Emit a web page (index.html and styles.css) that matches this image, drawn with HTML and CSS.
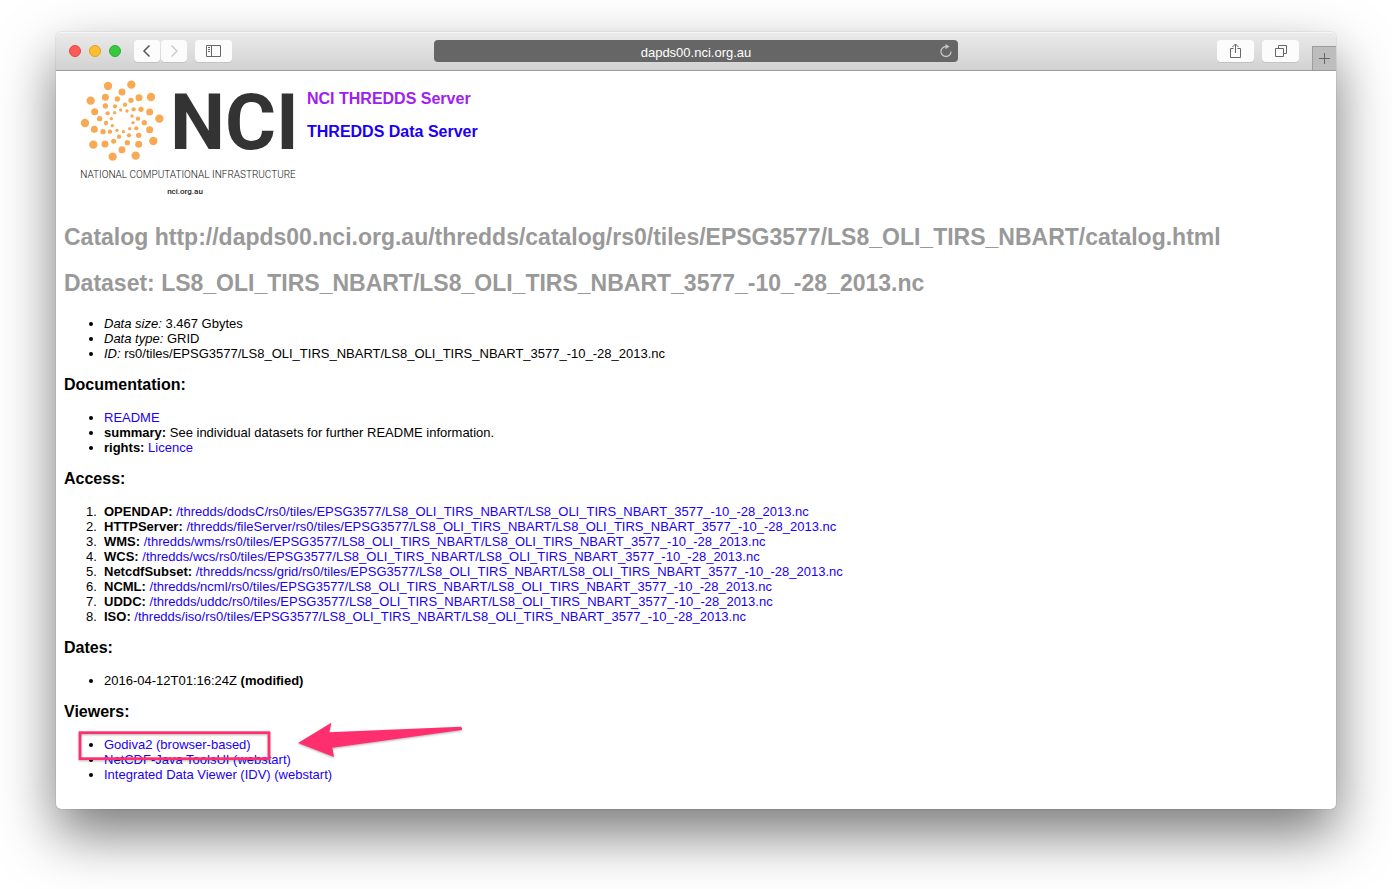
FILE: index.html
```html
<!DOCTYPE html>
<html lang="en">
<head>
<meta charset="utf-8">
<title>NCI THREDDS Server</title>
<link rel="stylesheet" href="styles.css">
</head>
<body>
<div class="window">
  <header class="toolbar">
    <div class="tools">
      <div class="lights">
        <button class="light close" aria-label="Close"></button>
        <button class="light minimise" aria-label="Minimise"></button>
        <button class="light zoom" aria-label="Zoom"></button>
      </div>
      <div class="nav">
        <button class="tool small" aria-label="Back"><svg width="26" height="22" viewBox="0 0 26 22"><path d="M15.500 5.500 10 11l5.500 5.500" fill="none" stroke="#555" stroke-width="1.500"/></svg></button>
        <button class="tool small" aria-label="Forward"><svg width="26" height="22" viewBox="0 0 26 22"><path d="M10.500 5.500 16 11l-5.500 5.500" fill="none" stroke="#ccc" stroke-width="1.500"/></svg></button>
      </div>
      <button class="tool" aria-label="Show sidebar"><svg width="37" height="22" viewBox="0 0 37 22" fill="none" stroke="#666"><path d="M11.500 5.500h14v11h-14zM16.500 5.500v11M13 7.500h2M13 9.500h2M13 11.500h2"/></svg></button>
    </div>
    <div class="address">
      <input class="url" type="text" aria-label="Address" value="dapds00.nci.org.au">
      <button class="reload" aria-label="Reload"><svg width="14" height="14" viewBox="0 0 14 14"><path d="M7 2.500A5 5 0 1 0 12 7.500" fill="none" stroke="#c4c4c4" stroke-width="1.300"/><path d="M6.500 0 10.500 2.600 6.500 5.200z" fill="#c4c4c4"/></svg></button>
    </div>
    <div class="tools right">
      <button class="tool" aria-label="Share"><svg width="37" height="22" viewBox="0 0 37 22" fill="none" stroke="#666"><path d="M16.500 8.500h-3v9h10v-9h-3M18.500 13V4M15.500 7l3-3 3 3"/></svg></button>
      <button class="tool" aria-label="Show all tabs"><svg width="37" height="22" viewBox="0 0 37 22" fill="none" stroke="#666"><path d="M13.500 8.500h8v8h-8zM16.500 8.500v-3h8v8h-3"/></svg></button>
      <button class="new-tab" aria-label="New tab"><svg width="23" height="24" viewBox="0 0 23 24"><path d="M6 11.500h11M11.500 6v11" stroke="#666"/></svg></button>
    </div>
  </header>
  <main class="page">
    <div class="masthead">
      <svg class="logo" width="232" height="125" viewBox="64 76 232 125" role="img" aria-label="NCI">
        <g fill="#f8a954" transform="translate(76 76) scale(.33333)">
          <circle cx="96" cy="30" r="12.500"/><circle cx="166" cy="26" r="12.500"/><circle cx="225" cy="63" r="12.500"/><circle cx="250" cy="128" r="12.500"/><circle cx="232" cy="195" r="12.500"/><circle cx="179" cy="239" r="12.500"/><circle cx="110" cy="242" r="12.500"/><circle cx="52" cy="206" r="12.500"/><circle cx="27" cy="141" r="12.500"/><circle cx="44" cy="74" r="12.500"/>
          <circle cx="138" cy="48" r="10.500"/><circle cx="189" cy="65" r="10.500"/><circle cx="221" cy="108" r="10.500"/><circle cx="221" cy="161" r="10.500"/><circle cx="188" cy="205" r="10.500"/><circle cx="138" cy="221" r="10.500"/><circle cx="87" cy="204" r="10.500"/><circle cx="55" cy="160" r="10.500"/><circle cx="56" cy="107" r="10.500"/><circle cx="88" cy="64" r="10.500"/>
          <circle cx="124" cy="69" r="8"/><circle cx="165" cy="73" r="8"/><circle cx="195" cy="100" r="8"/><circle cx="205" cy="140" r="8"/><circle cx="188" cy="178" r="8"/><circle cx="154" cy="200" r="8"/><circle cx="113" cy="196" r="7.500"/><circle cx="81" cy="167" r="8"/><circle cx="71" cy="128" r="8"/><circle cx="88" cy="90" r="8"/>
          <circle cx="147" cy="86" r="6.500"/><circle cx="173" cy="100" r="6.500"/><circle cx="186" cy="128" r="6.500"/><circle cx="181" cy="157" r="6.500"/><circle cx="159" cy="178" r="6.500"/><circle cx="129" cy="182" r="6.500"/><circle cx="102" cy="167" r="6.500"/><circle cx="90" cy="141" r="6.500"/><circle cx="95" cy="112" r="6.500"/><circle cx="117" cy="91" r="6.500"/>
          <circle cx="134" cy="102" r="5"/><circle cx="153" cy="105" r="5"/><circle cx="168" cy="120" r="5"/><circle cx="171" cy="140" r="5"/><circle cx="161" cy="158" r="5"/><circle cx="142" cy="167" r="5"/><circle cx="123" cy="163" r="5"/><circle cx="109" cy="149" r="5"/><circle cx="106" cy="128" r="5"/><circle cx="116" cy="110" r="5"/>
        </g>
        <text class="logo-name" x="170" y="149">NCI</text>
        <text class="logo-tag" x="188" y="178" text-anchor="middle">NATIONAL COMPUTATIONAL INFRASTRUCTURE</text>
        <text class="logo-site" x="185" y="194" text-anchor="middle">nci.org.au</text>
      </svg>
      <div class="titles">
        <h3><a class="visited" href="#nci">NCI THREDDS Server</a></h3>
        <h3><a href="#tds">THREDDS Data Server</a></h3>
      </div>
    </div>
    <h2>Catalog http://dapds00.nci.org.au/thredds/catalog/rs0/tiles/EPSG3577/LS8_OLI_TIRS_NBART/catalog.html</h2>
    <h2>Dataset: LS8_OLI_TIRS_NBART/LS8_OLI_TIRS_NBART_3577_-10_-28_2013.nc</h2>
    <ul>
      <li><em>Data size:</em> 3.467 Gbytes</li>
      <li><em>Data type:</em> GRID</li>
      <li><em>ID:</em> rs0/tiles/EPSG3577/LS8_OLI_TIRS_NBART/LS8_OLI_TIRS_NBART_3577_-10_-28_2013.nc</li>
    </ul>
    <h3>Documentation:</h3>
    <ul>
      <li><a href="#readme">README</a></li>
      <li><b>summary:</b> See individual datasets for further README information.</li>
      <li><b>rights:</b> <a href="#licence">Licence</a></li>
    </ul>
    <h3>Access:</h3>
    <ol>
      <li><b>OPENDAP:</b> <a href="#dodsC">/thredds/dodsC/rs0/tiles/EPSG3577/LS8_OLI_TIRS_NBART/LS8_OLI_TIRS_NBART_3577_-10_-28_2013.nc</a></li>
      <li><b>HTTPServer:</b> <a href="#fileServer">/thredds/fileServer/rs0/tiles/EPSG3577/LS8_OLI_TIRS_NBART/LS8_OLI_TIRS_NBART_3577_-10_-28_2013.nc</a></li>
      <li><b>WMS:</b> <a href="#wms">/thredds/wms/rs0/tiles/EPSG3577/LS8_OLI_TIRS_NBART/LS8_OLI_TIRS_NBART_3577_-10_-28_2013.nc</a></li>
      <li><b>WCS:</b> <a href="#wcs">/thredds/wcs/rs0/tiles/EPSG3577/LS8_OLI_TIRS_NBART/LS8_OLI_TIRS_NBART_3577_-10_-28_2013.nc</a></li>
      <li><b>NetcdfSubset:</b> <a href="#ncss">/thredds/ncss/grid/rs0/tiles/EPSG3577/LS8_OLI_TIRS_NBART/LS8_OLI_TIRS_NBART_3577_-10_-28_2013.nc</a></li>
      <li><b>NCML:</b> <a href="#ncml">/thredds/ncml/rs0/tiles/EPSG3577/LS8_OLI_TIRS_NBART/LS8_OLI_TIRS_NBART_3577_-10_-28_2013.nc</a></li>
      <li><b>UDDC:</b> <a href="#uddc">/thredds/uddc/rs0/tiles/EPSG3577/LS8_OLI_TIRS_NBART/LS8_OLI_TIRS_NBART_3577_-10_-28_2013.nc</a></li>
      <li><b>ISO:</b> <a href="#iso">/thredds/iso/rs0/tiles/EPSG3577/LS8_OLI_TIRS_NBART/LS8_OLI_TIRS_NBART_3577_-10_-28_2013.nc</a></li>
    </ol>
    <h3>Dates:</h3>
    <ul>
      <li>2016-04-12T01:16:24Z <b>(modified)</b></li>
    </ul>
    <h3>Viewers:</h3>
    <div class="viewers">
      <ul>
        <li><a href="#godiva2">Godiva2 (browser-based)</a></li>
        <li><a href="#toolsui">NetCDF-Java ToolsUI (webstart)</a></li>
        <li><a href="#idv">Integrated Data Viewer (IDV) (webstart)</a></li>
      </ul>
      <svg class="callout" width="420" height="110" viewBox="0 0 1260 330" aria-hidden="true">
        <rect x="60" y="98" width="567" height="78" fill="none" stroke="#ff2f6f" stroke-width="8"/>
        <path d="M714 129 814 68 808 97 1203 80Q1209 85 1205 90L817 143 822 171Z" fill="#ff2f6f"/>
      </svg>
    </div>
  </main>
</div>
</body>
</html>
```
FILE: styles.css
```css
* { box-sizing: border-box; }

@counter-style spaced-decimal {
  system: extends decimal;
  suffix: ".  ";
}

body {
  margin: 0;
  padding: 32px 56px 80px;
  background: #fff;
  color: #000;
  font: 13px/15px "Liberation Sans", Arial, sans-serif;
}

button { border: 0; padding: 0; margin: 0; }
svg { display: block; }

.window {
  border-radius: 5px;
  background: #fff;
  box-shadow: 0 0 1px rgba(0, 0, 0, .5), 0 25px 55px rgba(0, 0, 0, .53);
}

.toolbar {
  display: flex;
  align-items: center;
  height: 39px;
  border-bottom: 1px solid #9c9c9c;
  border-radius: 5px 5px 0 0;
  background: linear-gradient(#ebebeb, #d2d2d2);
  box-shadow: inset 0 1px #f6f6f6;
}

.tools {
  display: flex;
  flex: 1;
  align-items: center;
  align-self: stretch;
  gap: 8px;
}
.tools.right { justify-content: flex-end; }

.lights { display: flex; gap: 8px; margin: 0 5px 0 13px; }
.light { width: 12px; height: 12px; border-radius: 50%; }
.close { background: #fc5b57; border: 1px solid #e2463f; }
.minimise { background: #fdbe2f; border: 1px solid #e0a028; }
.zoom { background: #38c941; border: 1px solid #2bae2f; }

.nav { display: flex; gap: 1px; }
.tool {
  width: 37px;
  height: 22px;
  border-radius: 4px;
  background: #fcfcfc;
  box-shadow: 0 1px #c2c2c2;
}
.tool.small { width: 26px; }

.new-tab {
  align-self: flex-end;
  width: 24px;
  height: 24px;
  margin-left: 5px;
  border: solid #9c9c9c;
  border-width: 1px 0 0 1px;
  background: #bdbdbd;
}

.address { position: relative; width: 41%; }
.url {
  display: block;
  width: 100%;
  height: 22px;
  padding: 2px 24px 0;
  border: 0;
  border-radius: 4px;
  background: #666;
  color: #fff;
  font: 13px/20px "Liberation Sans", Arial, sans-serif;
  text-align: center;
}
.reload { position: absolute; right: 5px; top: 4px; background: none; }

.page { padding: 5px 8px 27px; }

.masthead { display: flex; gap: 11px; margin-bottom: 23px; }
.logo { flex: none; overflow: visible; }
.logo-name { font: bold 78px Roboto, sans-serif; fill: #333; }
.logo-tag { font: 300 10px Roboto, sans-serif; fill: #111; }
.logo-site { font: 500 8px Roboto, sans-serif; fill: #222; }

.titles { padding-top: 14px; }

h2 { margin: 20px 0; font-size: 23px; line-height: 26px; color: #999; }
h3 { margin: 15px 0 17px; font-size: 16px; line-height: 17px; }
.titles h3 { margin: 0 0 16px; }

ul, ol { margin: 0; padding-left: 40px; }
ol { list-style-type: spaced-decimal; }

a { color: #1b00f5; text-decoration: none; }
a.visited { color: #a020f0; }

.viewers { position: relative; }
.callout {
  position: absolute;
  left: -4px;
  top: -37px;
  pointer-events: none;
  filter: drop-shadow(0 1px 1px rgba(0, 0, 0, .3));
}
```
